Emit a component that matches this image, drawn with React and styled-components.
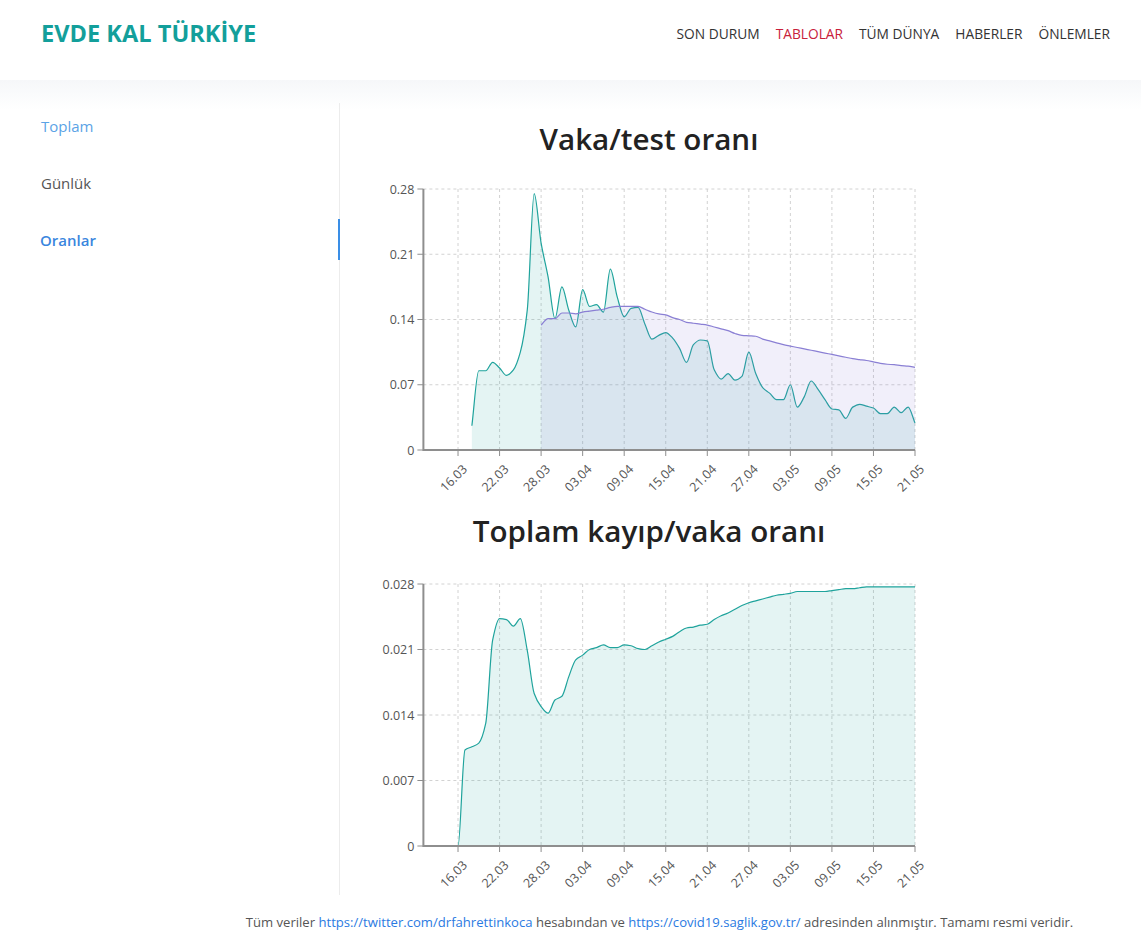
import styled, { createGlobalStyle } from "styled-components";

const GlobalStyle = createGlobalStyle`
  * { box-sizing: border-box; }
  body {
    margin: 0;
    background: #fff;
    font-family: "Open Sans", "Liberation Sans", sans-serif;
    color: #333;
  }
`;

const DAY = 6.924;
const AXIS_X = 74.4;
const TICKS = [
  "16.03", "22.03", "28.03", "03.04", "09.04", "15.04",
  "21.04", "27.04", "03.05", "09.05", "15.05", "21.05",
];

// vaka/test, from 18.03 (day 7)
const testRatio = [
  0.026, 0.085, 0.085, 0.094, 0.088, 0.080, 0.086, 0.105, 0.150, 0.275, // 7-16
  0.222, 0.186, 0.141, 0.175, 0.150, 0.132, 0.172, 0.154, 0.156, 0.148, // 17-26
  0.194, 0.164, 0.143, 0.152, 0.153, 0.135, 0.119, 0.123, 0.126, 0.120, // 27-36
  0.109, 0.094, 0.113, 0.118, 0.117, 0.086, 0.076, 0.082, 0.075, 0.079, // 37-46
  0.105, 0.082, 0.067, 0.061, 0.054, 0.054, 0.070, 0.046, 0.057, 0.074, // 47-56
  0.065, 0.054, 0.044, 0.043, 0.034, 0.046, 0.049, 0.047, 0.045, 0.039, // 57-66
  0.039, 0.046, 0.040, 0.046, 0.029, // 67-71
];

// toplam vaka/test, from 28.03 (day 17)
const testTotal = [
  0.134, 0.141, 0.141, 0.147, 0.147, 0.146, 0.148, 0.149, 0.150, 0.151, // 17-26
  0.153, 0.154, 0.154, 0.154, 0.154, 0.151, 0.148, 0.146, 0.145, 0.142, // 27-36
  0.140, 0.137, 0.136, 0.135, 0.134, 0.132, 0.130, 0.128, 0.125, 0.123, // 37-46
  0.1225, 0.122, 0.119, 0.117, 0.115, 0.113, 0.1115, 0.110, 0.1085, 0.107, // 47-56
  0.1055, 0.104, 0.1025, 0.101, 0.0995, 0.098, 0.097, 0.096, 0.0945, 0.093, // 57-66
  0.092, 0.0915, 0.0905, 0.090, 0.0887, // 67-71
];

// kayıp/vaka, from 11.03 (day 0)
const deathRatio = [
  0, 0, 0, 0, 0, 0, 0.01026, 0.0106, 0.011, 0.0131, // 0-9
  0.022, 0.0243, 0.0242, 0.0235, 0.0243, 0.0209, 0.0163, 0.0149, 0.0142, 0.0156, // 10-19
  0.016, 0.0181, 0.0199, 0.0204, 0.021, 0.0212, 0.0215, 0.0212, 0.0212, 0.0215, // 20-29
  0.0214, 0.0211, 0.021, 0.0214, 0.0218, 0.0221, 0.0224, 0.0229, 0.0233, 0.0234, // 30-39
  0.0236, 0.0237, 0.0242, 0.0246, 0.0249, 0.0253, 0.0257, 0.026, 0.0262, 0.0264, // 40-49
  0.0266, 0.0268, 0.0269, 0.027, 0.0272, 0.0272, 0.0272, 0.0272, 0.0272, 0.0273, // 50-59
  0.0274, 0.0275, 0.0275, 0.0276, 0.0277, 0.0277, 0.0277, 0.0277, 0.0277, 0.0277, // 60-69
  0.0277, 0.0277, // 70-71
];

// monotone cubic through the points
function curve(pts) {
  const n = pts.length;
  const dx = [];
  const m = [];
  for (let i = 0; i < n - 1; i++) {
    dx[i] = pts[i + 1][0] - pts[i][0];
    m[i] = (pts[i + 1][1] - pts[i][1]) / dx[i];
  }
  const t = [m[0]];
  for (let i = 1; i < n - 1; i++) {
    if (m[i - 1] * m[i] <= 0) t[i] = 0;
    else
      t[i] =
        (3 * (dx[i - 1] + dx[i])) /
        ((2 * dx[i] + dx[i - 1]) / m[i - 1] + (dx[i] + 2 * dx[i - 1]) / m[i]);
  }
  t[n - 1] = m[n - 2];
  let d = `M${pts[0][0]},${pts[0][1]}`;
  for (let i = 0; i < n - 1; i++) {
    const h = dx[i] / 3;
    d += `C${pts[i][0] + h},${pts[i][1] + t[i] * h},${pts[i + 1][0] - h},${
      pts[i + 1][1] - t[i + 1] * h
    },${pts[i + 1][0]},${pts[i + 1][1]}`;
  }
  return d;
}

const Page = styled.div`
  min-height: 946px;
  background: #fff;
`;

const Header = styled.header`
  height: 80px;
  display: flex;
  align-items: center;
  justify-content: space-between;
  padding: 0 31px 14px 41px;
`;

const Logo = styled.a`
  font-size: 23.6px;
  font-weight: 700;
  color: #139f9b;
  text-decoration: none;
`;

const Nav = styled.nav`
  display: flex;
  gap: 16px;
`;

const NavLink = styled.a`
  font-size: 13.75px;
  color: ${(p) => (p.$active ? "#c8203a" : "#333")};
  text-decoration: none;
`;

const Main = styled.main`
  display: flex;
  padding-top: 23px;
  background: linear-gradient(#f6f7f9 0, #fafbfc 14px, #fff 30px);
`;

const Sidebar = styled.aside`
  width: 340px;
  flex-shrink: 0;
  border-right: 1px solid #ececec;
  padding-top: 2px;
  display: flex;
  flex-direction: column;
  gap: 16px;
`;

const SideItem = styled.a`
  position: relative;
  height: 41px;
  display: flex;
  align-items: center;
  padding-left: ${(p) => (p.$active ? "40px" : "41px")};
  font-size: 15px;
  font-weight: ${(p) => (p.$active ? 600 : 400)};
  color: ${(p) => p.$color};
  text-decoration: none;

  &::after {
    content: "";
    display: ${(p) => (p.$active ? "block" : "none")};
    position: absolute;
    right: -1px;
    top: 0;
    width: 2px;
    height: 100%;
    background: #3a8ee6;
  }
`;

const Content = styled.section`
  width: 609px;
  padding: 17px 0 0 9px;
  display: flex;
  flex-direction: column;
`;

const ChartTitle = styled.h2`
  margin: 0 0 12px;
  font-size: 29.6px;
  line-height: 38px;
  font-weight: 600;
  color: #222;
  text-align: center;
`;

const Svg = styled.svg`
  display: block;
  overflow: visible;
`;

const Grid = styled.line`
  stroke: #d2d2d2;
  stroke-width: 1;
  stroke-dasharray: 3 3;
`;

const Axis = styled.line`
  stroke: #8e8e8e;
  stroke-width: 2;
`;

const Tick = styled.line`
  stroke: #8e8e8e;
  stroke-width: 1;
`;

const TickLabel = styled.text`
  font-family: "Open Sans", "Liberation Sans", sans-serif;
  font-size: 12.5px;
  fill: #555;
`;

const Area = styled.path`
  fill: ${(p) => p.$fill};
  stroke: none;
`;

const Line = styled.path`
  fill: none;
  stroke: ${(p) => p.$stroke};
  stroke-width: 1.2;
`;

const Footer = styled.footer`
  padding: 18px 0 20px 178px;
  text-align: center;
  font-size: 13.1px;
  line-height: 18px;
  color: #555;
`;

const FootLink = styled.a`
  color: #2a7ae2;
  text-decoration: none;
`;

function Chart({ series, yMax, yLabels, plotH, top, height }) {
  const right = AXIS_X + 71 * DAY;
  const bottom = top + plotH;
  const x = (d) => AXIS_X + d * DAY;
  const y = (v) => bottom - (v / yMax) * plotH;

  return (
    <Svg width="600" height={height}>
      {yLabels.map((label, i) => {
        const yy = top + plotH - (i * plotH) / (yLabels.length - 1);
        return (
          <g key={label}>
            {i > 0 && <Grid x1={AXIS_X} x2={right} y1={yy} y2={yy} />}
            <Tick x1={AXIS_X - 6} x2={AXIS_X} y1={yy} y2={yy} />
            <TickLabel x={AXIS_X - 9} y={yy + 4.5} textAnchor="end">
              {label}
            </TickLabel>
          </g>
        );
      })}
      {TICKS.map((label, i) => {
        const xx = x(5 + i * 6);
        return (
          <g key={label}>
            <Grid x1={xx} x2={xx} y1={top} y2={bottom} />
            <Tick x1={xx} x2={xx} y1={bottom} y2={bottom + 6} />
            <TickLabel
              textAnchor="end"
              transform={`translate(${xx + 10},${bottom + 20}) rotate(-45)`}
            >
              {label}
            </TickLabel>
          </g>
        );
      })}
      {series.map((s) => {
        const pts = s.values.map((v, i) => [x(s.start + i), y(v)]);
        const line = curve(pts);
        const area = `${line}L${pts[pts.length - 1][0]},${bottom}L${pts[0][0]},${bottom}Z`;
        return (
          <g key={s.name}>
            <Area d={area} $fill={s.fill} />
            <Line d={line} $stroke={s.stroke} />
          </g>
        );
      })}
      <Axis x1={AXIS_X} x2={AXIS_X} y1={top} y2={bottom + 1} />
      <Axis x1={AXIS_X} x2={right} y1={bottom} y2={bottom} />
    </Svg>
  );
}

const TEAL = { stroke: "#1fa39c", fill: "rgba(32,163,158,0.12)" };
const PURPLE = { stroke: "#8a7fd4", fill: "rgba(136,120,212,0.12)" };

export default function App() {
  return (
    <Page>
      <GlobalStyle />
      <Header>
        <Logo href="#">EVDE KAL TÜRKİYE</Logo>
        <Nav>
          <NavLink href="#">SON DURUM</NavLink>
          <NavLink href="#" $active>
            TABLOLAR
          </NavLink>
          <NavLink href="#">TÜM DÜNYA</NavLink>
          <NavLink href="#">HABERLER</NavLink>
          <NavLink href="#">ÖNLEMLER</NavLink>
        </Nav>
      </Header>
      <Main>
        <Sidebar>
          <SideItem href="#" $color="#5ba3e6">
            Toplam
          </SideItem>
          <SideItem href="#" $color="#555">
            Günlük
          </SideItem>
          <SideItem href="#" $color="#3a86de" $active>
            Oranlar
          </SideItem>
        </Sidebar>
        <Content>
          <ChartTitle>Vaka/test oranı</ChartTitle>
          <Chart
            top={19}
            plotH={261}
            height={342}
            yMax={0.28}
            yLabels={["0", "0.07", "0.14", "0.21", "0.28"]}
            series={[
              { name: "ratio", start: 7, values: testRatio, ...TEAL },
              { name: "total", start: 17, values: testTotal, ...PURPLE },
            ]}
          />
          <ChartTitle>Toplam kayıp/vaka oranı</ChartTitle>
          <Chart
            top={22}
            plotH={262}
            height={333}
            yMax={0.028}
            yLabels={["0", "0.007", "0.014", "0.021", "0.028"]}
            series={[{ name: "death", start: 0, values: deathRatio, ...TEAL }]}
          />
        </Content>
      </Main>
      <Footer>
        Tüm veriler{" "}
        <FootLink href="#">https://twitter.com/drfahrettinkoca</FootLink>{" "}
        hesabından ve{" "}
        <FootLink href="#">https://covid19.saglik.gov.tr/</FootLink> adresinden
        alınmıştır. Tamamı resmi veridir.
      </Footer>
    </Page>
  );
}
